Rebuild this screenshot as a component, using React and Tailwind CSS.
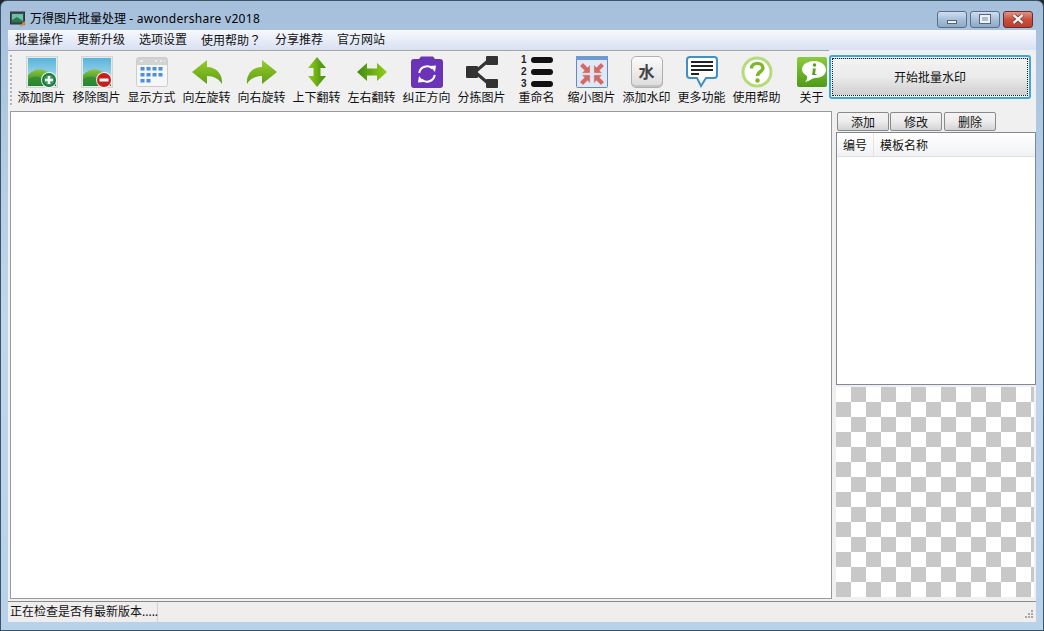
import { useId } from 'react'

const menus = ['批量操作', '更新升级', '选项设置', '使用帮助', '分享推荐', '官方网站']

function PhotoIcon({ badge }) {
  const id = useId()
  return (
    <svg width="32" height="32" viewBox="0 0 32 32">
      <defs>
        <linearGradient id={id + 's'} x1="0" y1="0" x2="0" y2="1">
          <stop offset="0" stopColor="#58b4dc" />
          <stop offset="1" stopColor="#c4e6f2" />
        </linearGradient>
        <linearGradient id={id + 'g'} x1="0" y1="0" x2="0" y2="1">
          <stop offset="0" stopColor="#8cc63f" />
          <stop offset="1" stopColor="#1c7a2c" />
        </linearGradient>
      </defs>
      <rect x="0.5" y="0.5" width="31" height="31" fill="#e8e8e8" stroke="#d4d4d4" />
      <rect x="2" y="2" width="28" height="28" fill={`url(#${id}s)`} />
      <path d="M2 19 C8 13 14 12 20 15 L30 20 V30 H2 Z" fill={`url(#${id}g)`} />
      <path d="M2 24 C8 19 13 20 18 24 L18 30 H2 Z" fill="#2a8a32" opacity="0.7" />
      <circle cx="23" cy="24" r="8" fill="#fff" opacity="0.85" />
      {badge === 'add' ? (
        <>
          <circle cx="23" cy="24" r="7" fill="#17733a" />
          <circle cx="23" cy="24" r="5.5" fill="#2f9a55" />
          <path d="M23 20v8M19 24h8" stroke="#fff" strokeWidth="2.6" />
        </>
      ) : (
        <>
          <circle cx="23" cy="24" r="7" fill="#c81e1e" />
          <path d="M18.5 24h9" stroke="#fff" strokeWidth="3" />
        </>
      )}
    </svg>
  )
}

function GridIcon() {
  const cells = []
  for (let r = 0; r < 3; r++) {
    for (let c = 0; c < 4; c++) {
      if (r === 2 && c > 1) continue
      cells.push(<rect key={r + '-' + c} x={4.5 + c * 6} y={11 + r * 6} width="4" height="3.5" fill="#4a8ee0" />)
    }
  }
  return (
    <svg width="32" height="32" viewBox="0 0 32 32">
      <rect x="0.5" y="1.5" width="31" height="29" rx="2" fill="#f6f6f6" stroke="#cccccc" />
      <rect x="1" y="2" width="30" height="7" fill="#d2d2d2" />
      <path d="M4 5h3M19 5h2M24 5h2M28 5h1" stroke="#f4f4f4" strokeWidth="1.5" />
      {cells}
    </svg>
  )
}

function CurveArrow({ flip }) {
  const id = useId()
  return (
    <svg width="32" height="32" viewBox="0 0 32 32" className={flip ? '-scale-x-100' : ''}>
      <defs>
        <linearGradient id={id} x1="0" y1="0" x2="0" y2="1">
          <stop offset="0" stopColor="#96cc2e" />
          <stop offset="1" stopColor="#5fa012" />
        </linearGradient>
      </defs>
      <path d="M1 16 L16 4 V11 C26 11 32 19 31 28 C28 23 23 20 16 20 V28 Z" fill={`url(#${id})`} />
    </svg>
  )
}

function VArrow() {
  const id = useId()
  return (
    <svg width="32" height="32" viewBox="0 0 32 32">
      <defs>
        <linearGradient id={id} x1="0" y1="0" x2="1" y2="0">
          <stop offset="0" stopColor="#94ce1c" />
          <stop offset="1" stopColor="#3f8a0c" />
        </linearGradient>
      </defs>
      <path d="M16 1 L25 12 H19.5 V20 H25 L16 31 L7 20 H12.5 V12 H7 Z" fill={`url(#${id})`} />
    </svg>
  )
}

function HArrow() {
  const id = useId()
  return (
    <svg width="32" height="32" viewBox="0 0 32 32">
      <defs>
        <linearGradient id={id} x1="0" y1="0" x2="1" y2="0">
          <stop offset="0" stopColor="#3f8a0c" />
          <stop offset="1" stopColor="#94ce1c" />
        </linearGradient>
      </defs>
      <path d="M1 16 L11 7 V12.5 H21 V7 L31 16 L21 25 V19.5 H11 V25 Z" fill={`url(#${id})`} />
    </svg>
  )
}

function CameraIcon() {
  return (
    <svg width="32" height="32" viewBox="0 0 32 32">
      <path d="M3 3 H8 L10 0.5 H22 L24 3 H29 Q32 3 32 6 V29 Q32 32 29 32 H3 Q0 32 0 29 V6 Q0 3 3 3 Z" fill="#6a33b8" />
      <path d="M8.200 17 A8 8 0 0 1 21.500 12.500" fill="none" stroke="#fff" strokeWidth="2" />
      <path d="M19 10 L25 9.500 L24 16 Z" fill="#fff" />
      <path d="M23.800 19 A8 8 0 0 1 10.500 23.500" fill="none" stroke="#fff" strokeWidth="2" />
      <path d="M13 26 L7 26.500 L8 20 Z" fill="#fff" />
    </svg>
  )
}

function ShareIcon() {
  return (
    <svg width="32" height="32" viewBox="0 0 32 32">
      <path d="M9 16 L23 4 M9 16 L23 28" stroke="#333" strokeWidth="3" fill="none" />
      <rect x="0" y="10" width="12" height="12" rx="1" fill="#333" />
      <rect x="20" y="0" width="12" height="9" rx="1" fill="#333" />
      <rect x="20" y="23" width="12" height="9" rx="1" fill="#333" />
    </svg>
  )
}

function ListIcon() {
  return (
    <svg width="36" height="34" viewBox="0 0 36 34" className="overflow-visible">
      <g fontFamily="Liberation Sans, sans-serif" fontSize="10" fontWeight="700" fill="#222">
        <text x="2" y="8">1</text>
        <text x="2" y="20">2</text>
        <text x="2" y="32">3</text>
      </g>
      <rect x="12" y="2" width="22" height="6" rx="3" fill="#111" />
      <rect x="12" y="14" width="22" height="6" rx="3" fill="#111" />
      <rect x="12" y="26" width="22" height="6" rx="3" fill="#111" />
    </svg>
  )
}

function ShrinkIcon() {
  const arrow = 'M14 16 L14 8 L11.500 10.500 L7 6 L4 9 L8.500 13.500 L6 16 Z'
  return (
    <svg width="32" height="32" viewBox="0 0 32 32">
      <rect x="0.5" y="0.5" width="31" height="31" rx="1" fill="#dfe8f4" stroke="#5f8cc4" />
      <rect x="0" y="0" width="32" height="4" fill="#6f9ad0" />
      <g fill="#cf6a66" stroke="#e8b8b4" strokeWidth="0.5">
        <path d={arrow} transform="translate(0 1)" />
        <path d={arrow} transform="translate(32 1) scale(-1 1)" />
        <path d={arrow} transform="translate(0 35) scale(1 -1)" />
        <path d={arrow} transform="translate(32 35) scale(-1 -1)" />
      </g>
    </svg>
  )
}

function KeyIcon() {
  return (
    <div className="w-[32px] h-[32px] rounded-[5px] border border-[#b0b0b0] bg-gradient-to-b from-[#fbfbfb] to-[#dcdcdc] shadow-[inset_0_-2px_0_#c4c4c4] flex items-center justify-center text-[16px] font-bold text-[#444] leading-none">
      水
    </div>
  )
}

function BubbleIcon() {
  return (
    <svg width="32" height="32" viewBox="0 0 32 32">
      <path d="M4 1 H28 Q31 1 31 4 V19 Q31 22 28 22 H20 L15 30 L11 22 H4 Q1 22 1 19 V4 Q1 1 4 1 Z" fill="#fff" stroke="#3f8fc8" strokeWidth="2" />
      <path d="M5 6 H27 M5 10 H27 M5 14 H27 M5 18 H13" stroke="#222" strokeWidth="2" />
    </svg>
  )
}

function HelpIcon() {
  return (
    <svg width="32" height="32" viewBox="0 0 32 32">
      <circle cx="16" cy="16" r="14" fill="#fff" stroke="#b4dc78" strokeWidth="3" />
      <path d="M10.5 12.5 C10.5 5.5 22 6 22 12 C22 16 16.5 15.5 16.5 20" fill="none" stroke="#7fb52c" strokeWidth="3.4" />
      <circle cx="16.5" cy="24.5" r="2.2" fill="#7fb52c" />
    </svg>
  )
}

function AboutIcon() {
  const id = useId()
  return (
    <svg width="30" height="30" viewBox="0 0 30 30">
      <defs>
        <linearGradient id={id} x1="0" y1="0" x2="0" y2="1">
          <stop offset="0" stopColor="#8ccb3c" />
          <stop offset="1" stopColor="#4e9a18" />
        </linearGradient>
      </defs>
      <rect width="30" height="30" rx="2" fill={`url(#${id})`} />
      <path d="M17 4 C24 4 29 8 29 13 C29 18 24 21 18 21 C15 21 13 24 8 25 C10 23 10.500 21 10 19 C7 17 5 15 5 12.500 C5 8 10 4 17 4 Z" fill="#fff" />
      <circle cx="17.500" cy="8" r="1.800" fill="#5f9e20" />
      <path d="M15.500 11.500 H18.800 L18 17 H19.500 V18 H15 L16 12.500 H15.500 Z" fill="#5f9e20" />
    </svg>
  )
}

const tools = [
  { label: '添加图片', icon: <PhotoIcon badge="add" /> },
  { label: '移除图片', icon: <PhotoIcon badge="remove" /> },
  { label: '显示方式', icon: <GridIcon /> },
  { label: '向左旋转', icon: <CurveArrow /> },
  { label: '向右旋转', icon: <CurveArrow flip /> },
  { label: '上下翻转', icon: <VArrow /> },
  { label: '左右翻转', icon: <HArrow /> },
  { label: '纠正方向', icon: <CameraIcon /> },
  { label: '分拣图片', icon: <ShareIcon /> },
  { label: '重命名', icon: <ListIcon /> },
  { label: '缩小图片', icon: <ShrinkIcon /> },
  { label: '添加水印', icon: <KeyIcon /> },
  { label: '更多功能', icon: <BubbleIcon /> },
  { label: '使用帮助', icon: <HelpIcon /> },
  { label: '关于', icon: <AboutIcon /> },
]

function WinButton({ className, children }) {
  return (
    <div className={'h-[17px] border border-[#5a6e86] rounded-[3px] flex items-center justify-center ' + className}>
      {children}
    </div>
  )
}

function SmallButton({ children }) {
  return (
    <button className="w-[52px] h-[19px] pt-[2px] border border-[#8a8a8a] rounded-[2px] bg-gradient-to-b from-[#f4f4f4] via-[#ececec] to-[#d4d4d4] text-[12px] leading-none text-[#111] last:ml-[1px]">
      {children}
    </button>
  )
}

export default function App() {
  return (
    <div className="w-[1044px] h-[631px] bg-[#1c2a30] overflow-hidden font-['Noto_Sans','Noto_Sans_CJK_SC',sans-serif] text-[12px] text-[#111]">
      <div className="h-full border border-[#3a5568] rounded-t-[7px] bg-gradient-to-b from-[#a6c0dc] via-[#c0d6ec] to-[#b8d2ec] flex flex-col px-[7px] pb-[8px]">
        {/* title bar */}
        <div className="h-[29px] shrink-0 flex items-center pt-[7px]">
          <svg width="16" height="16" viewBox="0 0 16 16" className="ml-[2px]">
            <rect x="0.5" y="1" width="14" height="12" fill="#3a4a58" stroke="#333" />
            <rect x="2" y="3" width="11" height="8" fill="#6cc0a8" />
            <path d="M2 9 L7 6 L13 10 V11 H2 Z" fill="#2c7a4a" />
            <path d="M11 15 L15 11" stroke="#e08a28" strokeWidth="2" />
          </svg>
          <span className="ml-[4px] text-[12px] text-black whitespace-nowrap">
            万得图片批量处理 <span className="tracking-[0.3px]">- awondershare v2018</span>
          </span>
          <div className="ml-auto mr-[3px] flex gap-[3px]">
            <WinButton className="w-[30px] bg-gradient-to-b from-[#cfdeee] via-[#a8c0da] to-[#8ea9c6]">
              <div className="w-[10px] h-[4px] mt-[5px] bg-[#f2f2f2] border border-[#5a6474]" />
            </WinButton>
            <WinButton className="w-[30px] bg-gradient-to-b from-[#cfdeee] via-[#a8c0da] to-[#8ea9c6]">
              <div className="w-[10px] h-[8px] bg-[#a8bcd2] border-2 border-[#eef2f6] outline outline-1 outline-[#5a6474]" />
            </WinButton>
            <WinButton className="w-[30px] bg-gradient-to-b from-[#e09488] via-[#c8503c] to-[#b8402e] border-[#6e2a28]">
              <svg width="12" height="10" viewBox="0 0 12 10">
                <path d="M1.500 1 L10.500 9 M10.500 1 L1.500 9" stroke="#5a2a2a" strokeWidth="3.600" />
                <path d="M1.500 1 L10.500 9 M10.500 1 L1.500 9" stroke="#f2f2f2" strokeWidth="2.400" />
              </svg>
            </WinButton>
          </div>
        </div>

        {/* menu bar */}
        <div className="h-[20px] shrink-0 flex items-center bg-gradient-to-b from-[#f6f9fd] to-[#d9e0f1]">
          {menus.map((m) => (
            <span key={m} className="px-[7px] text-[12px] text-[#111] whitespace-nowrap">
              {m}
              {m === '使用帮助' && <span className="font-['Noto_Sans_CJK_TC',sans-serif]">？</span>}
            </span>
          ))}
        </div>

        <div className="flex-1 min-h-0 flex flex-col bg-[#f0f0f0]">
          <div className="flex flex-1 min-h-0">
            {/* toolbar and canvas */}
            <div className="w-[824px] shrink-0 flex flex-col">
              <div className="h-[61px] shrink-0 w-[821px] border-t border-[#a4a4a4] flex overflow-hidden">
                <div className="w-[6px] shrink-0 flex flex-col gap-[2px] pt-[4px] pl-[2px]">
                  {Array.from({ length: 13 }).map((_, i) => (
                    <div key={i} className="w-[2px] h-[2px] bg-[#b4b4b4]" />
                  ))}
                </div>
                {tools.map((t) => (
                  <div key={t.label} className="w-[55px] shrink-0 flex flex-col items-center pt-[4px]">
                    <div className="h-[34px] flex items-center justify-center">{t.icon}</div>
                    <span className="text-[12px] leading-[16px] mt-[1px] whitespace-nowrap">{t.label}</span>
                  </div>
                ))}
              </div>
              <div className="ml-[2px] flex-1 bg-white border border-[#9a9a9a]" />
            </div>

            {/* right panel */}
            <div className="flex-1 min-w-0 flex flex-col">
              <button className="-ml-[3px] mt-[5px] w-[202px] h-[44px] shrink-0 rounded-[3px] border-2 border-[#3fa6dc] p-[1px] bg-[#f0f0f0]">
                <div className="w-full h-full pt-[1px] border border-dotted border-[#222] bg-gradient-to-b from-[#f2f2f2] via-[#ebebeb] to-[#cfcfcf] flex items-center justify-center text-[12px]">
                  开始批量水印
                </div>
              </button>
              <div className="flex gap-[1px] pl-[5px] mt-[13px] shrink-0">
                <SmallButton>添加</SmallButton>
                <SmallButton>修改</SmallButton>
                <SmallButton>删除</SmallButton>
              </div>
              <div className="ml-[4px] mt-[1px] h-[253px] shrink-0 border border-[#7f8a96] bg-white">
                <div className="h-[24px] flex items-center bg-gradient-to-b from-white to-[#f1f2f4] border-b border-[#dfe0e2]">
                  <div className="w-[37px] pl-[6px] pt-[2px] h-full flex items-center border-r border-[#e4e4e4]">编号</div>
                  <div className="pl-[6px] pt-[2px]">模板名称</div>
                </div>
              </div>
              <div className="ml-[4px] mr-[2px] mt-[2px] mb-[2px] flex-1 bg-[conic-gradient(#c8c8c8_25%,#ffffff_0_50%,#c8c8c8_0_75%,#ffffff_0)] bg-[length:30px_30px]" />
            </div>
          </div>

          {/* status bar */}
          <div className="mt-[2px] h-[21px] shrink-0 border-t border-[#8a8a8a] bg-[#f0eded] flex items-center relative">
            <div className="w-[150px] h-full pl-[2px] flex items-center border-r border-[#d4d0d0] text-[#111] whitespace-nowrap">正在检查是否有最新版本.....</div>
            <svg width="12" height="12" viewBox="0 0 12 12" className="absolute right-[2px] bottom-[1px]">
              <g fill="#a8a8a8">
                <rect x="9" y="1" width="2" height="2" />
                <rect x="6" y="4" width="2" height="2" />
                <rect x="9" y="4" width="2" height="2" />
                <rect x="3" y="7" width="2" height="2" />
                <rect x="6" y="7" width="2" height="2" />
                <rect x="9" y="7" width="2" height="2" />
              </g>
            </svg>
          </div>
        </div>
      </div>
    </div>
  )
}
